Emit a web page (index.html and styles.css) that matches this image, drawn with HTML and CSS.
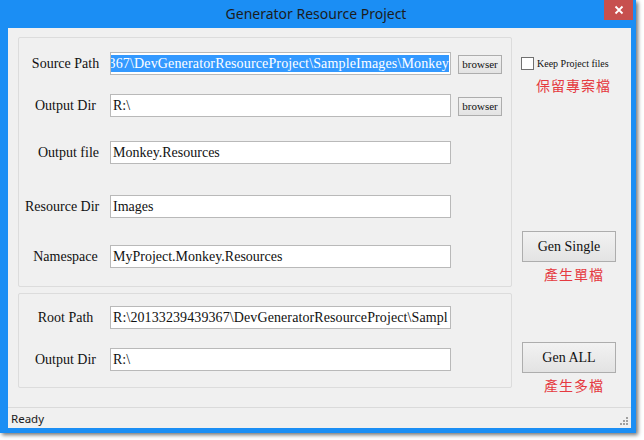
FILE: index.html
```html
<!DOCTYPE html>
<html>
<head>
<meta charset="utf-8">
<link rel="stylesheet" href="styles.css">
</head>
<body>
<div class="window">
  <div class="titlebar">
    <span class="title">Generator Resource Project</span>
    <div class="close"><svg width="10" height="10" viewBox="0 0 10 10"><path d="M1.5 1.5 L8.5 8.5 M8.5 1.5 L1.5 8.5" stroke="#fff" stroke-width="1.8"/></svg></div>
  </div>
  <div class="client">
    <div class="main">
      <div class="left">
        <div class="group group-top">
          <div class="form form-top">
            <label class="lbl">Source Path</label>
            <div class="field-row">
              <div class="input input-sel"><span class="sel">367\DevGeneratorResourceProject\SampleImages\Monkey</span></div>
              <button class="btn-small">browser</button>
            </div>
            <label class="lbl">Output Dir</label>
            <div class="field-row">
              <div class="input">R:\</div>
              <button class="btn-small">browser</button>
            </div>
            <label class="lbl lbl-shift">Output file</label>
            <div class="field-row"><div class="input">Monkey.Resources</div></div>
            <label class="lbl lbl-wide">Resource Dir</label>
            <div class="field-row"><div class="input">Images</div></div>
            <label class="lbl">Namespace</label>
            <div class="field-row"><div class="input">MyProject.Monkey.Resources</div></div>
          </div>
        </div>
        <div class="group group-bottom">
          <div class="form form-bottom">
            <label class="lbl">Root Path</label>
            <div class="field-row"><div class="input input-root">R:\20133239439367\DevGeneratorResourceProject\Sampl</div></div>
            <label class="lbl">Output Dir</label>
            <div class="field-row"><div class="input">R:\</div></div>
          </div>
        </div>
      </div>
      <div class="right">
        <div class="check-row"><span class="checkbox"></span><span class="check-label">Keep Project files</span></div>
        <div class="note note-keep">保留專案檔</div>
        <button class="btn-big btn-single">Gen Single</button>
        <div class="note">產生單檔</div>
        <button class="btn-big btn-all">Gen ALL</button>
        <div class="note">產生多檔</div>
      </div>
    </div>
    <div class="status">
      <span class="status-text">Ready</span>
      <svg class="grip" width="10" height="10" viewBox="0 0 10 10">
        <rect x="7" y="1" width="2" height="2" fill="#a0a0a0"/>
        <rect x="4" y="4" width="2" height="2" fill="#a0a0a0"/>
        <rect x="7" y="4" width="2" height="2" fill="#a0a0a0"/>
        <rect x="1" y="7" width="2" height="2" fill="#a0a0a0"/>
        <rect x="4" y="7" width="2" height="2" fill="#a0a0a0"/>
        <rect x="7" y="7" width="2" height="2" fill="#a0a0a0"/>
      </svg>
    </div>
  </div>
</div>
</body>
</html>
```
FILE: styles.css
```css
* { box-sizing: border-box; }
html, body { margin: 0; padding: 0; background: #ffffff; }
body { width: 644px; height: 440px; overflow: hidden; }

.window {
  position: relative;
  width: 636px;
  height: 433px;
  background: #1b8ef4;
  box-shadow: 2px 2px 4px rgba(0,0,0,0.55);
  display: flex;
  flex-direction: column;
}
.titlebar {
  height: 28px;
  display: flex;
  align-items: center;
  justify-content: center;
  padding-bottom: 2px;
}
.title {
  font-family: "Noto Sans", "Open Sans", sans-serif;
  font-size: 14px;
  color: #1c1c1c;
  margin-left: -4px;
}
.close {
  position: absolute;
  top: 0;
  right: 3px;
  width: 29px;
  height: 20px;
  background: #c7504e;
  display: flex;
  align-items: center;
  justify-content: center;
}
.client {
  margin-left: 8px;
  width: 623px;
  height: 400px;
  background: #f0f0f0;
  display: flex;
  flex-direction: column;
}
.main {
  flex: 1;
  display: flex;
  padding: 9px 0 0 10px;
}
.left {
  width: 494px;
  display: flex;
  flex-direction: column;
  gap: 6px;
}
.group {
  border: 1px solid #dcdcdc;
  border-radius: 2px;
}
.group-top { height: 250px; }
.group-bottom { height: 95px; }

.form {
  display: grid;
  grid-template-columns: 91px 392px;
  align-items: start;
}
.form-top {
  padding-top: 14px;
  grid-template-rows: 42px 47px 54px 50px 24px;
}
.form-bottom {
  padding-top: 12px;
  grid-template-rows: 42px 24px;
}
.lbl {
  font-family: "Liberation Serif", serif;
  font-size: 14px;
  color: #111;
  text-align: center;
  line-height: 23px;
  padding-left: 2px;
}
.lbl-shift { padding-left: 8px; }
.lbl-wide { text-align: left; padding-left: 6px; }

.field-row {
  display: flex;
  align-items: center;
  gap: 7px;
}
.input {
  width: 341px;
  height: 23px;
  background: #fff;
  border: 1px solid #b9b9b9;
  font-family: "Liberation Serif", serif;
  font-size: 14px;
  color: #111;
  line-height: 21px;
  padding-left: 2px;
  white-space: nowrap;
  overflow: hidden;
}
.input-root { letter-spacing: 0.1px; }
.input-sel {
  display: flex;
  justify-content: flex-end;
  padding: 0 1px 0 0;
}
.sel {
  background: #3399ff;
  color: #fff;
  line-height: 17px;
  margin-top: 2px;
  height: 17px;
  letter-spacing: 0.15px;
  padding-left: 1px;
}
.btn-small {
  width: 44px;
  height: 19px;
  padding: 0;
  margin-top: 1px;
  border: 1px solid #adadad;
  background: linear-gradient(#f2f2f2, #e3e3e3);
  font-family: "Liberation Serif", serif;
  font-size: 11px;
  color: #111;
}

.right {
  flex: 1;
  display: flex;
  flex-direction: column;
  padding-left: 9px;
}
.check-row {
  display: flex;
  align-items: center;
  margin-top: 20px;
  height: 13px;
}
.checkbox {
  width: 13px;
  height: 13px;
  border: 1px solid #707070;
  background: #fff;
}
.check-label {
  font-family: "Liberation Serif", serif;
  font-size: 10px;
  color: #111;
  margin-left: 3px;
}
.note {
  font-family: "Noto Sans CJK TC", sans-serif;
  font-size: 14px;
  letter-spacing: 1px;
  color: #e53a40;
  line-height: 16px;
  margin-top: 4px;
  padding-left: 23px;
}
.note-keep { padding-left: 15px; margin-top: 7px; }
.btn-big {
  width: 94px;
  height: 31px;
  padding: 0;
  border: 1px solid #adadad;
  background: linear-gradient(#f2f2f2, #e3e3e3);
  font-family: "Liberation Serif", serif;
  font-size: 14px;
  color: #111;
  margin-left: 1px;
}
.btn-single { margin-top: 138px; }
.btn-all { margin-top: 60px; }

.status {
  height: 21px;
  border-top: 1px solid #dadada;
  display: flex;
  align-items: center;
  justify-content: space-between;
  padding: 0 2px 0 3px;
}
.status-text {
  font-family: "Noto Sans", sans-serif;
  font-size: 11.5px;
  color: #1a1a1a;
}
.grip { align-self: flex-end; margin-bottom: 2px; }
```
